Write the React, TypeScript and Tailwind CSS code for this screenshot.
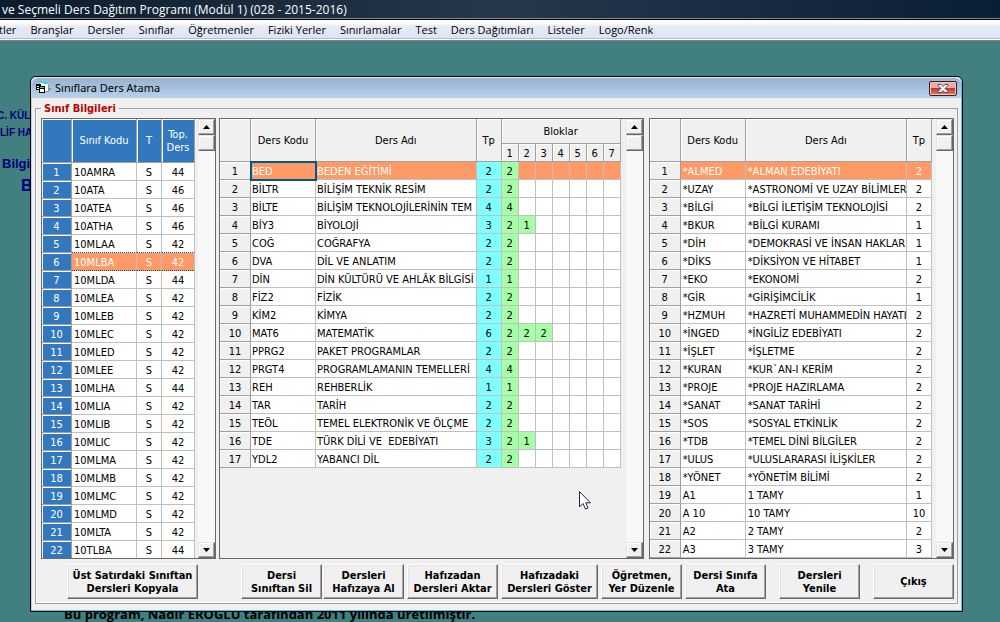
const Btn = ({ text, className }: { text: string; className: string }) => (
    <button
        type="button"
        className={`h-[35px] shrink whitespace-pre-line border border-white border-r-[#696969] border-b-[#696969] bg-[#f0f0f0] text-[11px] leading-[13px] font-bold shadow-[inset_-1px_-1px_0_#a0a0a0,inset_1px_1px_0_#e3e3e3] ${className}`}
    >
        {text}
    </button>
);

const scrollBtn =
    'flex h-[16px] w-full items-center justify-center border border-[#e3e3e3] border-r-[#696969] border-b-[#696969] bg-[#f0f0f0] shadow-[inset_-1px_-1px_0_#a0a0a0,inset_1px_1px_0_#fff]';

function ScrollBar() {
    return (
        <div className="ml-auto flex w-[17px] shrink-0 flex-col bg-[#f8f8f8]">
            <button type="button" aria-label="Yukarı" className={scrollBtn}>
                <svg width="7" height="4" viewBox="0 0 7 4"><path d="M0 4L3.5 0L7 4Z" /></svg>
            </button>
            <div className={scrollBtn} />
            <div className="flex-1" />
            <button type="button" aria-label="Aşağı" className={scrollBtn}>
                <svg width="7" height="4" viewBox="0 0 7 4"><path d="M0 0L3.5 4L7 0Z" /></svg>
            </button>
        </div>
    );
}

const classes = [
    ['10AMRA', 44], ['10ATA', 46], ['10ATEA', 46], ['10ATHA', 46], ['10MLAA', 42], ['10MLBA', 42],
    ['10MLDA', 44], ['10MLEA', 42], ['10MLEB', 42], ['10MLEC', 42], ['10MLED', 42], ['10MLEE', 42],
    ['10MLHA', 44], ['10MLIA', 42], ['10MLIB', 42], ['10MLIC', 42], ['10MLMA', 42], ['10MLMB', 42],
    ['10MLMC', 42], ['10MLMD', 42], ['10MLTA', 42], ['10TLBA', 44],
] as const;

// code, name, total hours, block sizes
const lessons: [string, string, number, number[]][] = [
    ['BED', 'BEDEN EĞİTİMİ', 2, [2]],
    ['BİLTR', 'BİLİŞİM TEKNİK RESİM', 2, [2]],
    ['BİLTE', 'BİLİŞİM TEKNOLOJİLERİNİN TEM', 4, [4]],
    ['BİY3', 'BİYOLOJİ', 3, [2, 1]],
    ['COĞ', 'COĞRAFYA', 2, [2]],
    ['DVA', 'DİL VE ANLATIM', 2, [2]],
    ['DİN', 'DİN KÜLTÜRÜ VE AHLÂK BİLGİSİ', 1, [1]],
    ['FİZ2', 'FİZİK', 2, [2]],
    ['KİM2', 'KİMYA', 2, [2]],
    ['MAT6', 'MATEMATİK', 6, [2, 2, 2]],
    ['PPRG2', 'PAKET PROGRAMLAR', 2, [2]],
    ['PRGT4', 'PROGRAMLAMANIN TEMELLERİ', 4, [4]],
    ['REH', 'REHBERLİK', 1, [1]],
    ['TAR', 'TARİH', 2, [2]],
    ['TEÖL', 'TEMEL ELEKTRONİK VE ÖLÇME', 2, [2]],
    ['TDE', 'TÜRK DİLİ VE  EDEBİYATI', 3, [2, 1]],
    ['YDL2', 'YABANCI DİL', 2, [2]],
];

const pool: [string, string, number][] = [
    ['*ALMED', '*ALMAN EDEBİYATI', 2],
    ['*UZAY', '*ASTRONOMİ VE UZAY BİLİMLER', 2],
    ['*BİLGİ', '*BİLGİ İLETİŞİM TEKNOLOJİSİ', 2],
    ['*BKUR', '*BİLGİ KURAMI', 1],
    ['*DİH', '*DEMOKRASİ VE İNSAN HAKLARI', 1],
    ['*DİKS', '*DİKSİYON VE HİTABET', 1],
    ['*EKO', '*EKONOMİ', 2],
    ['*GİR', '*GİRİŞİMCİLİK', 1],
    ['*HZMUH', '*HAZRETİ MUHAMMEDİN HAYATI', 2],
    ['*İNGED', '*İNGİLİZ EDEBİYATI', 2],
    ['*İŞLET', '*İŞLETME', 2],
    ['*KURAN', '*KUR`AN-I KERİM', 2],
    ['*PROJE', '*PROJE HAZIRLAMA', 2],
    ['*SANAT', '*SANAT TARİHİ', 2],
    ['*SOS', '*SOSYAL ETKİNLİK', 2],
    ['*TDB', '*TEMEL DİNİ BİLGİLER', 2],
    ['*ULUS', '*ULUSLARARASI İLİŞKİLER', 2],
    ['*YÖNET', '*YÖNETİM BİLİMİ', 2],
    ['A1', '1 TAMY', 1],
    ['A 10', '10 TAMY', 10],
    ['A2', '2 TAMY', 2],
    ['A3', '3 TAMY', 3],
];

const frame = 'flex overflow-hidden border border-[#696969] bg-[#f0f0f0]';
const table = 'w-full table-fixed border-separate border-spacing-0 text-[11px] leading-[15px]';
const head = 'border-r border-b border-[#a0a0a0] p-0 font-normal shadow-[inset_1px_1px_0_#fff]';
const cell = 'overflow-hidden border-r border-b border-[#c0c0c0] p-0 pt-[2px] whitespace-pre';
const hot = 'bg-[#ff9966] text-white';

function ClassGrid() {
    return (
        <div className={`${frame} mr-[3px] w-[175px] shrink-0`}>
            <div className="w-[153px]">
                <table className={table}>
                    <colgroup>
                        <col className="w-[30px]" />
                        <col className="w-[65px]" />
                        <col className="w-[25px]" />
                        <col />
                    </colgroup>
                    <thead className="bg-[#3278be] text-white">
                        <tr className="h-[44px]">
                            <th className={head} />
                            <th className={head}>Sınıf Kodu</th>
                            <th className={head}>T</th>
                            <th className={`${head} leading-[13px]`}>Top.<br />Ders</th>
                        </tr>
                    </thead>
                    <tbody>
                        {classes.map(([code, total], i) => {
                            const bg = i === 5 ? hot : 'bg-white';
                            // focus rectangle above and below the selected row
                            const line = i === 4 || i === 5 ? 'border-b-[#00537f] [border-bottom-style:dotted]' : '';
                            return (
                                <tr key={code}>
                                    <th className={`${head} bg-[#3278be] pt-[2px] text-white`}>{i + 1}</th>
                                    <td className={`${cell} ${bg} ${line} pl-[2px]`}>{code}</td>
                                    <td className={`${cell} ${bg} ${line} text-center`}>S</td>
                                    <td className={`${cell} ${bg} ${line} text-center`}>{total}</td>
                                </tr>
                            );
                        })}
                    </tbody>
                </table>
            </div>
            <ScrollBar />
        </div>
    );
}

function LessonGrid() {
    return (
        <div className={`${frame} mr-[5px] min-w-0 flex-[425]`}>
            <div className="min-w-0 flex-1 pr-[5px]">
                <table className={table}>
                    <colgroup>
                        <col className="w-[31px]" />
                        <col className="w-[65px]" />
                        <col />
                        <col className="w-[25px]" />
                        {[1, 2, 3, 4, 5, 6, 7].map((n) => <col key={n} className="w-[17px]" />)}
                    </colgroup>
                    <thead>
                        <tr className="h-[25px]">
                            <th rowSpan={2} className={head} />
                            <th rowSpan={2} className={head}>Ders Kodu</th>
                            <th rowSpan={2} className={head}>Ders Adı</th>
                            <th rowSpan={2} className={head}>Tp</th>
                            <th colSpan={7} className={head}>Bloklar</th>
                        </tr>
                        <tr className="h-[18px]">
                            {[1, 2, 3, 4, 5, 6, 7].map((n) => <th key={n} className={`${head} pt-[2px]`}>{n}</th>)}
                        </tr>
                    </thead>
                    <tbody>
                        {lessons.map(([code, name, tp, blocks], i) => {
                            const bg = i === 0 ? hot : 'bg-white';
                            return (
                                <tr key={code}>
                                    <th className={`${head} pt-[2px]`}>{i + 1}</th>
                                    <td className={`${cell} ${bg} pl-px ${i === 0 ? 'outline-2 -outline-offset-1 outline-[#005a87]' : ''}`}>{code}</td>
                                    <td className={`${cell} ${bg} pl-px`}>{name}</td>
                                    <td className={`${cell} bg-[#80ffff] text-center`}>{tp}</td>
                                    {[0, 1, 2, 3, 4, 5, 6].map((b) => (
                                        <td key={b} className={`${cell} text-center ${blocks[b] ? 'bg-[#a6ffa6]' : bg}`}>{blocks[b]}</td>
                                    ))}
                                </tr>
                            );
                        })}
                    </tbody>
                </table>
            </div>
            <ScrollBar />
        </div>
    );
}

function PoolGrid() {
    return (
        <div className={`${frame} min-w-0 flex-[305]`}>
            <div className="min-w-0 flex-1 pr-[4px]">
                <table className={table}>
                    <colgroup>
                        <col className="w-[31px]" />
                        <col className="w-[65px]" />
                        <col />
                        <col className="w-[25px]" />
                    </colgroup>
                    <thead>
                        <tr className="h-[43px]">
                            <th className={head} />
                            <th className={head}>Ders Kodu</th>
                            <th className={head}>Ders Adı</th>
                            <th className={head}>Tp</th>
                        </tr>
                    </thead>
                    <tbody>
                        {pool.map(([code, name, tp], i) => {
                            const bg = i === 0 ? hot : 'bg-white';
                            return (
                                <tr key={code}>
                                    <th className={`${head} pt-[2px]`}>{i + 1}</th>
                                    <td className={`${cell} ${bg} pl-[2px]`}>{code}</td>
                                    <td className={`${cell} ${bg} pl-[2px]`}>{name}</td>
                                    <td className={`${cell} ${bg} text-center`}>{tp}</td>
                                </tr>
                            );
                        })}
                    </tbody>
                </table>
            </div>
            <ScrollBar />
        </div>
    );
}

const FormIcon = () => (
    <svg width="16" height="14" viewBox="0 0 16 14" shapeRendering="crispEdges">
        <path d="M4 2h8v2h1v6H8V5H4Z" fill="#fff" />
        <path d="M2 0h3v1h5v1H6V1H2ZM8 2h4v1H8Z" fill="#00e5e5" />
        <path d="M12 4h1v6h-1ZM9 10h4v1H9ZM13 7h2v2h-2Z" fill="#8a8f96" />
        <path d="M0 3h5v2h4v7H3V9H0Z" fill="#000" />
        <path d="M1 5h2v1H1ZM1 7h2v1H1ZM4 8h4v3H4Z" fill="#fff" />
        <path d="M4 6h4v1H4Z" fill="#00e5e5" />
    </svg>
);

const menu = ['tler', 'Branşlar', 'Dersler', 'Sınıflar', 'Öğretmenler', 'Fiziki Yerler', 'Sınırlamalar', 'Test', 'Ders Dağıtımları', 'Listeler', 'Logo/Renk'];

export default function App() {
    return (
        <div className="relative flex min-h-screen flex-col overflow-hidden bg-[#427f7f] font-['DejaVu_Sans_Condensed','DejaVu_Sans',sans-serif] text-black">
            <header className="font-['Open_Sans',sans-serif]">
                <h1 className="h-[20px] border-b border-black bg-linear-to-r from-[#0b1c2e] via-[#26384c] to-[#0a1e34] pl-[2px] text-[12px] leading-[19px] text-white shadow-[inset_0_-1px_0_#7d8793]">
                    ve Seçmeli Ders Dağıtım Programı (Modül 1) (028 - 2015-2016)
                </h1>
                <nav className="-ml-px flex h-[21px] gap-[14px] border-b border-[#808080] bg-linear-to-b from-white from-10% via-[#e6eaf5] via-35% to-[#dde2f2] text-[11px] leading-[20px] shadow-[inset_0_-1px_0_#fff,inset_0_-2px_0_#b4bcd8]">
                    {menu.map((m) => <a key={m} href="#" className="shrink-0">{m}</a>)}
                </nav>
            </header>

            {/* school heading and footer lie under the form */}
            <div className="absolute top-[107px] left-[-3px] font-['Liberation_Sans',sans-serif] font-bold whitespace-nowrap text-[#000080]">
                <p className="text-[10px] leading-[17px]">C. KÜL</p>
                <p className="pl-[3px] text-[10px] leading-[17px]">LİF HA</p>
                <p className="pt-[13px] pl-[5px] text-[13px] leading-[20px]">Bilgi</p>
                <p className="pt-[2px] pl-[24px] text-[16px] leading-[20px]">B</p>
            </div>
            <p className="absolute top-[607px] left-[64px] font-['Open_Sans',sans-serif] text-[13px] leading-[15px] font-bold whitespace-nowrap">
                Bu program, Nadir EROĞLU tarafından 2011 yılında üretilmiştir.
            </p>

            <main className="absolute top-[76px] right-[37px] left-[30px] rounded-t-md border border-black bg-[#f0f0f0]">
                <div className="rounded-t-md border border-t-[#dce8f4] border-r-[#53c6ea] border-b-[#53c6ea] border-l-[#b9d1ea]">
                    <div className="flex h-[20px] items-center gap-[3px] rounded-t-md bg-linear-to-b from-[#98b2d0] to-[#b9d1ea] px-[4px]">
                        <FormIcon />
                        <h2 className="flex-1 font-['Noto_Sans',sans-serif] text-[11px] leading-[16px]">Sınıflara Ders Atama</h2>
                        <button type="button" aria-label="Kapat" className="flex h-[15px] w-[28px] items-center justify-center rounded-[2px] border border-[#4a1620] bg-linear-to-b from-[#e8b0a4] from-45% via-[#bf3a26] via-50% to-[#d9806c] shadow-[inset_0_0_0_1px_#eec4ba]">
                            <svg width="12" height="9" viewBox="0 0 12 9">
                                <path d="M1 0.5H4L6 2.5L8 0.5H11V1.5L8 4.5L11 7.5V8.5H8L6 6.5L4 8.5H1V7.5L4 4.5L1 1.5Z" fill="#fff" stroke="#4b5066" />
                            </svg>
                        </button>
                    </div>
                    <fieldset className="mx-[3px] mb-[6px] border border-[#a0a0a0] pr-[3px] pb-[4px] pl-[5px] shadow-[inset_1px_0_0_#fff,inset_0_-1px_0_#fff]">
                        <legend className="px-[3px] pt-[2px] text-[11px] leading-[18px] font-bold text-[#c00000]">Sınıf Bilgileri</legend>
                        <div className="flex h-[441px]">
                            <ClassGrid />
                            <LessonGrid />
                            <PoolGrid />
                        </div>
                        <div className="mt-[5px] flex pl-[26px]">
                            <Btn text={'Üst Satırdaki Sınıftan\nDersleri Kopyala'} className="w-[131px]" />
                            <Btn text={'Dersi\nSınıftan Sil'} className="ml-[43px] w-[81px]" />
                            <Btn text={'Dersleri\nHafızaya Al'} className="ml-px w-[81px]" />
                            <Btn text={'Hafızadan\nDersleri Aktar'} className="ml-[3px] w-[91px]" />
                            <Btn text={'Hafızadaki\nDersleri Göster'} className="ml-[3px] w-[97px]" />
                            <Btn text={'Öğretmen,\nYer Düzenle'} className="ml-[3px] w-[81px]" />
                            <Btn text={'Dersi Sınıfa\nAta'} className="ml-[3px] w-[81px]" />
                            <Btn text={'Dersleri\nYenile'} className="ml-auto w-[81px]" />
                            <Btn text="Çıkış" className="ml-[13px] w-[81px]" />
                        </div>
                    </fieldset>
                </div>
            </main>

            <svg className="absolute top-[490px] left-[578px]" width="13" height="20" viewBox="0 0 13 20">
                <path d="M1.5 1.5V17L5 13.5L7.5 19L10 18L7.8 12.8H12.3Z" fill="#fff" stroke="#22223a" />
            </svg>
        </div>
    );
}
